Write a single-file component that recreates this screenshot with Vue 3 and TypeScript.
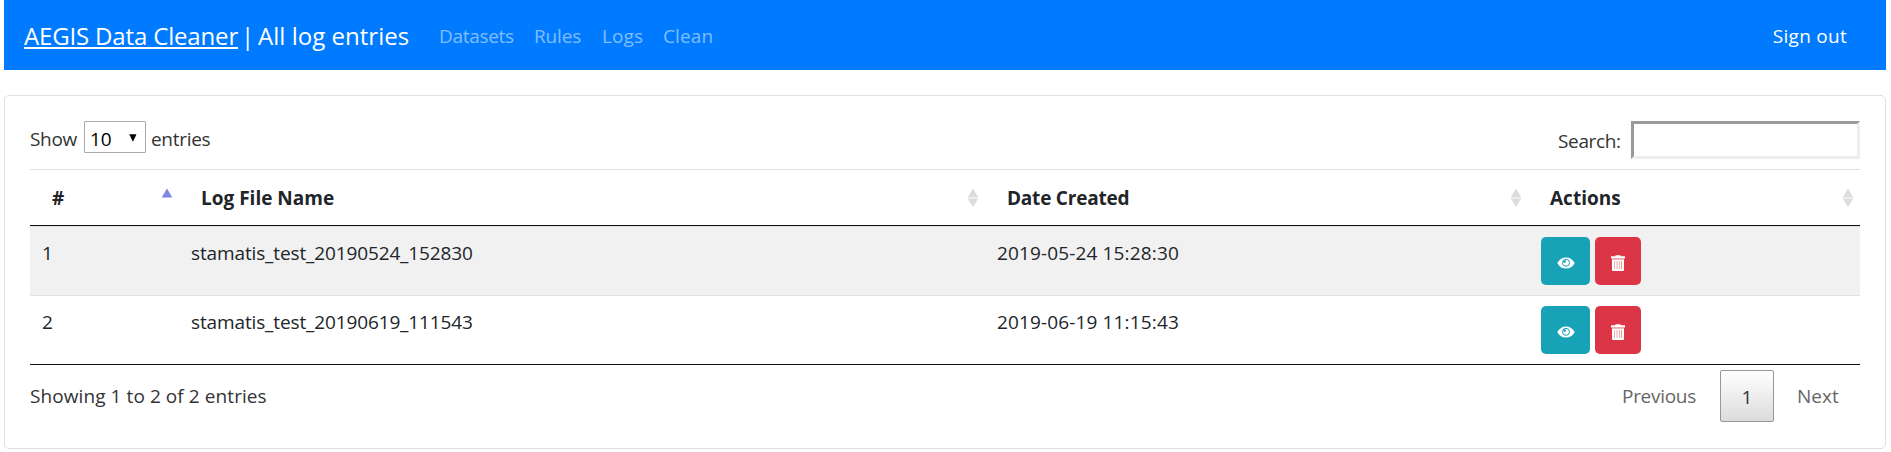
<script setup lang="ts">
interface LogEntry {
  id: number
  name: string
  created: string
}

interface Column {
  key: string
  label: string
  sort: 'asc' | 'both'
}

const navLinks: string[] = ['Datasets', 'Rules', 'Logs', 'Clean']

const columns: Column[] = [
  { key: 'id', label: '#', sort: 'asc' },
  { key: 'name', label: 'Log File Name', sort: 'both' },
  { key: 'created', label: 'Date Created', sort: 'both' },
  { key: 'actions', label: 'Actions', sort: 'both' },
]

const entries: LogEntry[] = [
  { id: 1, name: 'stamatis_test_20190524_152830', created: '2019-05-24 15:28:30' },
  { id: 2, name: 'stamatis_test_20190619_111543', created: '2019-06-19 11:15:43' },
]
</script>

<template>
  <div class="page">
    <header class="navbar">
      <div class="brand">
        <a class="brand-link">AEGIS Data Cleaner</a>
        <span class="bar">|</span>
        <span class="brand-page">All log entries</span>
      </div>
      <nav class="links">
        <a v-for="link in navLinks" :key="link" :class="['link', link.toLowerCase()]">{{ link }}</a>
      </nav>
      <a class="signout">Sign out</a>
    </header>

    <main class="card">
      <div class="toolbar">
        <div class="length">
          <span class="show">Show</span>
          <span class="select">
            <span>10</span>
            <svg width="8" height="8" viewBox="0 0 8 8"><path d="M0.3 0.3h7.2L3.9 7.8z" fill="#000" /></svg>
          </span>
          <span class="ent">entries</span>
        </div>
        <label class="search">
          <span>Search:</span>
          <input type="text" />
        </label>
      </div>

      <table>
        <thead>
          <tr>
            <th v-for="col in columns" :key="col.key" :class="'col-' + col.key">
              <div class="head">
                <span>{{ col.label }}</span>
                <svg class="sort" width="12" height="20" viewBox="0 0 12 20">
                  <path d="M6 0.5L11.3 9.5H0.7z" :fill="col.sort === 'asc' ? '#8085e3' : '#dcdcdc'" />
                  <path v-if="col.sort === 'both'" d="M0.7 10.5H11.3L6 19z" fill="#dcdcdc" />
                </svg>
              </div>
            </th>
          </tr>
        </thead>
        <tbody>
          <tr v-for="entry in entries" :key="entry.id">
            <td>{{ entry.id }}</td>
            <td class="name">{{ entry.name }}</td>
            <td class="created">{{ entry.created }}</td>
            <td>
              <div class="actions">
                <button class="btn view" aria-label="View">
                  <svg width="18" height="12" viewBox="0 0 18 12">
                    <path d="M0.3 6C2.2 2.3 5.2 0.4 9 0.4S15.8 2.3 17.7 6C15.8 9.7 12.8 11.6 9 11.6S2.2 9.7 0.3 6z" fill="#fff" />
                    <circle cx="9" cy="5.8" r="3.5" fill="none" stroke="#17a2b8" stroke-width="1" />
                    <circle cx="7.6" cy="4.6" r="1.3" fill="#17a2b8" />
                  </svg>
                </button>
                <button class="btn delete" aria-label="Delete">
                  <svg width="14" height="16" viewBox="0 0 14 16">
                    <path d="M4.5 1.2V0.3h5v0.9H14V3.4H0V1.2z" fill="#fff" />
                    <path d="M1 3.4h12V4.4H1z" fill="#f3b4ba" />
                    <path d="M1 4.4h12V15a1 1 0 0 1-1 1H2a1 1 0 0 1-1-1z" fill="#fff" />
                    <path d="M3.5 6v8M6 6v8M8.4 6v8" stroke="#e9a3b4" stroke-width="0.9" />
                    <path d="M10.5 6v8" stroke="#f0a65a" stroke-width="1" />
                  </svg>
                </button>
              </div>
            </td>
          </tr>
        </tbody>
      </table>

      <footer class="foot">
        <div class="info">Showing 1 to 2 of 2 entries</div>
        <div class="pages">
          <span class="prev">Previous</span>
          <span class="current">1</span>
          <span class="next">Next</span>
        </div>
      </footer>
    </main>
  </div>
</template>

<style>
body {
  background: #fff;
}
</style>

<style scoped>
.page {
  box-sizing: border-box;
  height: 452px;
  padding: 0 5px 0 4px;
  overflow: hidden;
  font: 19px/30px 'Open Sans', 'Noto Sans', sans-serif;
  color: #212529;
}
.page * {
  box-sizing: border-box;
}
.navbar {
  display: flex;
  align-items: center;
  height: 70px;
  padding: 2px 39px 0 20px;
  background: #007bff;
  color: #fff;
}
.brand {
  display: flex;
  font-size: 24px;
  line-height: 36px;
}
.brand-link {
  width: 214px;
  letter-spacing: -0.16px;
  text-decoration: underline;
  text-decoration-thickness: 2px;
  text-underline-offset: 2px;
  white-space: nowrap;
}
.bar {
  width: 20px;
  padding-left: 3px;
}
.brand-page {
  width: 181px;
  letter-spacing: 0.03px;
}
.links {
  display: flex;
  color: rgba(255, 255, 255, 0.5);
}
.link {
  white-space: nowrap;
}
.datasets {
  width: 95px;
  letter-spacing: -0.3px;
}
.rules {
  width: 68px;
  letter-spacing: -0.15px;
}
.logs {
  width: 61px;
  letter-spacing: 0.1px;
}
.clean {
  letter-spacing: 0.1px;
}
.signout {
  margin-left: auto;
  letter-spacing: 0.28px;
}
.card {
  height: 354px;
  margin-top: 25px;
  padding: 25px 25px 0;
  border: 1px solid #dfdfdf;
  border-radius: 5px;
}
.toolbar {
  display: flex;
  justify-content: space-between;
  height: 48px;
  color: #333;
}
.length {
  display: flex;
  height: 32px;
}
.show,
.ent {
  padding-top: 3px;
}
.show {
  width: 54px;
  letter-spacing: -0.3px;
}
.select {
  display: flex;
  justify-content: space-between;
  width: 62px;
  height: 32px;
  padding: 2px 8px 0 5px;
  border: 1px solid #a9a9a9;
  border-radius: 1px;
  background: #fff;
  color: #000;
}
.select svg {
  margin-top: 10px;
}
.ent {
  padding-left: 5px;
  letter-spacing: -0.3px;
}
.search {
  display: flex;
}
.search span {
  width: 73px;
  padding-top: 5px;
  letter-spacing: -0.35px;
}
.search input {
  width: 229px;
  height: 38px;
  border: 3px solid;
  border-color: #9a9a9a #eee #eee #9a9a9a;
  outline: 0;
  background: #fff;
}
table {
  width: 1830px;
  table-layout: fixed;
  border-collapse: separate;
  border-spacing: 0;
  border-bottom: 1px solid #111;
}
th {
  height: 57px;
  padding: 13px 6px 0 22px;
  border-top: 1px solid #dee2e6;
  border-bottom: 1px solid #111;
  font-weight: 700;
  text-align: left;
  vertical-align: top;
}
.col-id {
  width: 149px;
}
.col-name {
  width: 806px;
}
.col-created {
  width: 543px;
  letter-spacing: -0.22px;
}
.head {
  display: flex;
  justify-content: space-between;
}
.sort {
  margin-top: 5px;
}
td {
  height: 69px;
  padding: 11px 0 0 12px;
  border-top: 1px solid #dee2e6;
  vertical-align: top;
}
td:last-child {
  padding-left: 13px;
}
tbody tr:first-child td {
  background: #f1f1f1;
  border-top-color: #e3e1e6;
}
.name {
  letter-spacing: -0.13px;
}
.created {
  letter-spacing: 0.14px;
}
.actions {
  display: flex;
  gap: 5px;
  margin-top: -1px;
}
.btn {
  display: flex;
  align-items: center;
  justify-content: center;
  height: 48px;
  padding: 4px 0 0;
  border: 0;
  border-radius: 5px;
}
.view {
  width: 49px;
  background: #17a2b8;
}
.delete {
  width: 46px;
  background: #dc3545;
}
.foot {
  display: flex;
  justify-content: space-between;
  color: #333;
}
.info {
  padding-top: 16px;
  letter-spacing: 0.08px;
}
.pages {
  display: flex;
  padding-top: 5px;
  line-height: 52px;
  color: #666;
}
.prev {
  width: 98px;
  letter-spacing: -0.3px;
}
.current {
  width: 54px;
  height: 52px;
  border: 1px solid #979797;
  border-radius: 2px;
  background: linear-gradient(#fff, #dcdcdc);
  color: #333;
  text-align: center;
}
.next {
  width: 86px;
  padding-left: 23px;
}
</style>
